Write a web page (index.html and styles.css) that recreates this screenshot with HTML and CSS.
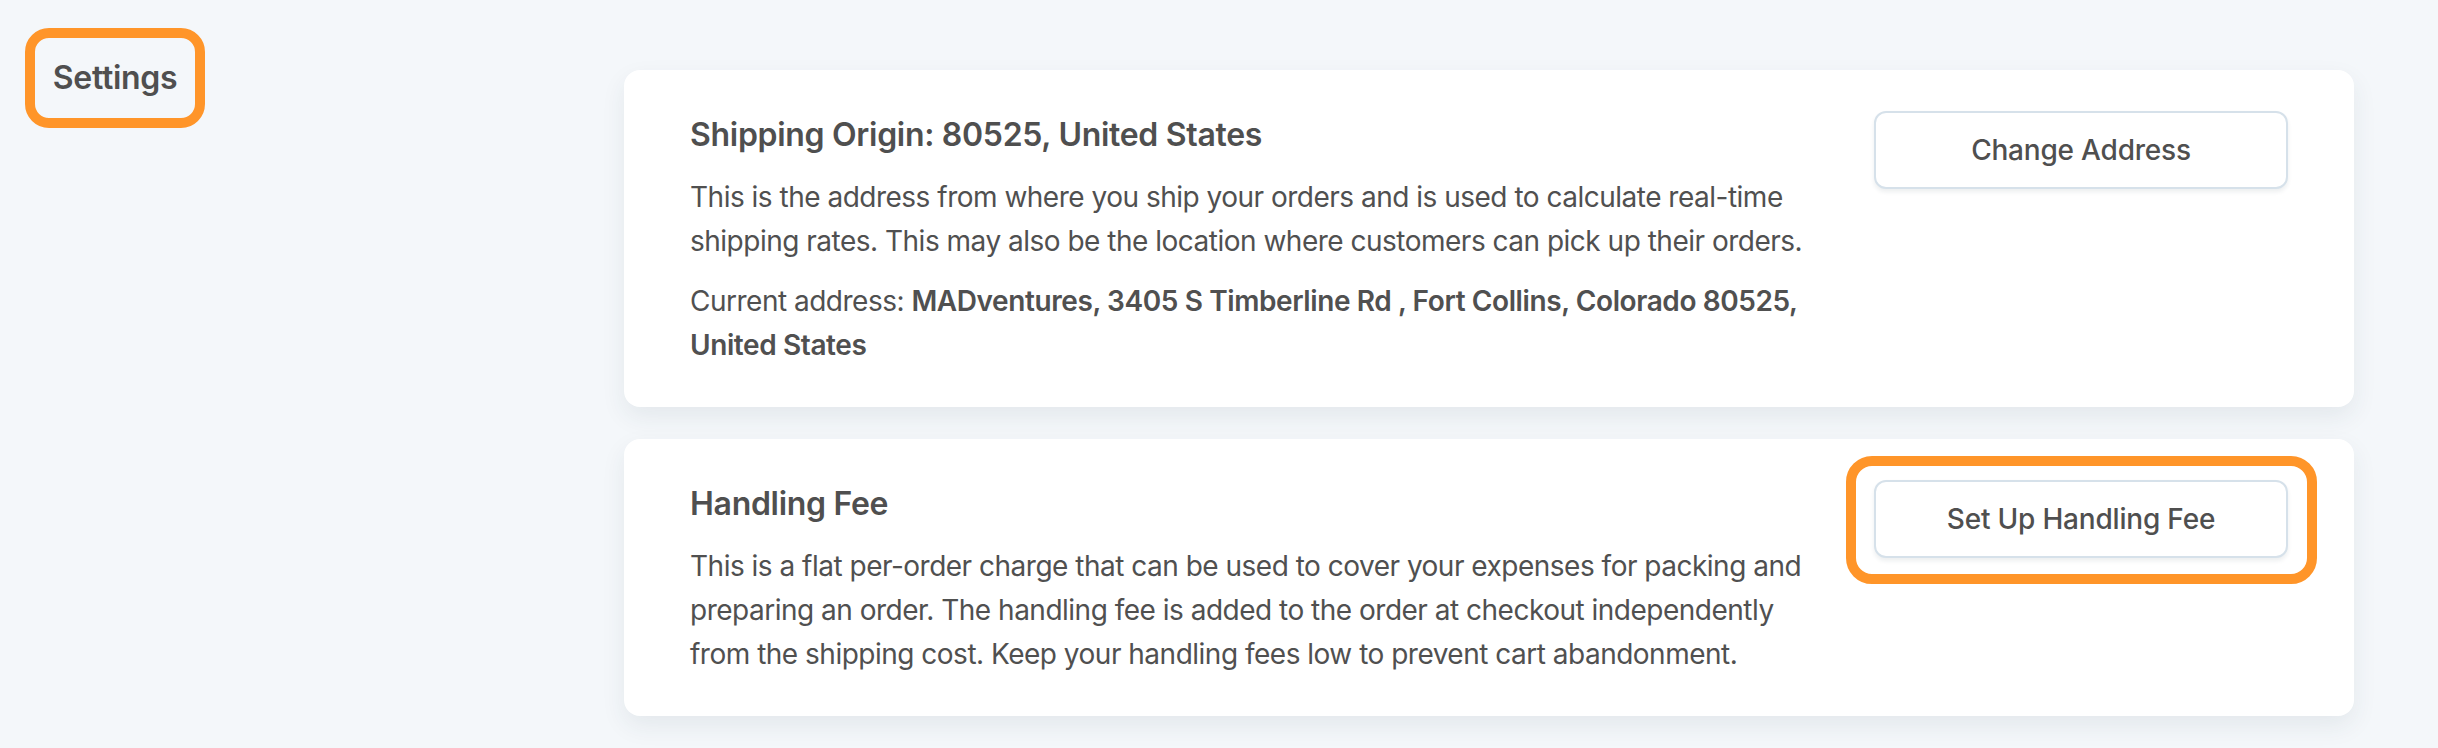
FILE: index.html
```html
<!DOCTYPE html>
<html lang="en">
<head>
<meta charset="utf-8">
<title>Shipping Settings</title>
<link rel="stylesheet" href="styles.css">
</head>
<body>
<div class="page">
  <aside class="sidebar">
    <span class="settings-label">Settings</span>
  </aside>
  <main class="content">
    <section class="card">
      <div class="card-text">
        <h2 class="card-title">Shipping Origin: 80525, United States</h2>
        <p>This is the address from where you ship your orders and is used to calculate real-time shipping rates. This may also be the location where customers can pick up their orders.</p>
        <p>Current address: <strong>MADventures, 3405 S Timberline Rd , Fort Collins, Colorado 80525, United States</strong></p>
      </div>
      <div class="card-action">
        <button class="btn" type="button">Change Address</button>
      </div>
    </section>
    <section class="card">
      <div class="card-text">
        <h2 class="card-title">Handling Fee</h2>
        <p>This is a flat per-order charge that can be used to cover your expenses for packing and preparing an order. The handling fee is added to the order at checkout independently from the shipping cost. Keep your handling fees low to prevent cart abandonment.</p>
      </div>
      <div class="card-action highlighted">
        <button class="btn" type="button">Set Up Handling Fee</button>
      </div>
    </section>
  </main>
</div>
</body>
</html>
```
FILE: styles.css
```css
* { box-sizing: border-box; }

html, body {
  margin: 0;
  padding: 0;
}

body {
  background: #f4f7fa;
  color: #505050;
  font-family: Inter, "Noto Sans", sans-serif;
  font-size: 28px;
  line-height: 44px;
  width: 2438px;
  height: 748px;
  overflow: hidden;
}

.page {
  display: flex;
  align-items: flex-start;
}

.sidebar {
  flex: 0 0 624px;
  padding: 28px 0 0 25px;
}

.settings-label {
  display: flex;
  align-items: center;
  justify-content: center;
  width: 180px;
  height: 100px;
  border: 10px solid #ff9529;
  border-radius: 24px;
  font-size: 32px;
  font-weight: 600;
  line-height: 40px;
  color: #4f4f4f;
  letter-spacing: -0.3px;
}

.content {
  flex: 0 0 1730px;
  padding-top: 70px;
  display: flex;
  flex-direction: column;
  gap: 32px;
}

.card {
  background: #ffffff;
  border-radius: 16px;
  box-shadow: 0 10px 24px rgba(40, 60, 80, 0.08);
  padding: 41px 66px 40px 66px;
  display: flex;
  align-items: flex-start;
  gap: 48px;
}

.card-text {
  flex: 1 1 auto;
  min-width: 0;
}

.card-title {
  margin: 0 0 16px 0;
  font-size: 32px;
  line-height: 48px;
  font-weight: 600;
  color: #4f4f4f;
  letter-spacing: -0.3px;
}

.card-text p {
  margin: 0 0 16px 0;
  letter-spacing: -0.5px;
}

.card-text p:last-child {
  margin-bottom: 0;
}

.card-text strong {
  font-weight: 600;
  letter-spacing: -0.4px;
}

.card-action {
  flex: 0 0 414px;
  position: relative;
}

.btn {
  display: block;
  width: 414px;
  height: 78px;
  background: #ffffff;
  border: 2px solid #d6e1ea;
  border-radius: 12px;
  box-shadow: 0 3px 4px rgba(30, 50, 70, 0.08);
  font-family: Inter, "Noto Sans", sans-serif;
  font-size: 28px;
  font-weight: 500;
  color: #4f4f4f;
  letter-spacing: -0.2px;
  cursor: pointer;
}

.highlighted::after {
  content: "";
  position: absolute;
  top: -24px;
  left: -28px;
  right: -29px;
  bottom: -26px;
  border: 10px solid #ff9529;
  border-radius: 26px;
  pointer-events: none;
}
```
